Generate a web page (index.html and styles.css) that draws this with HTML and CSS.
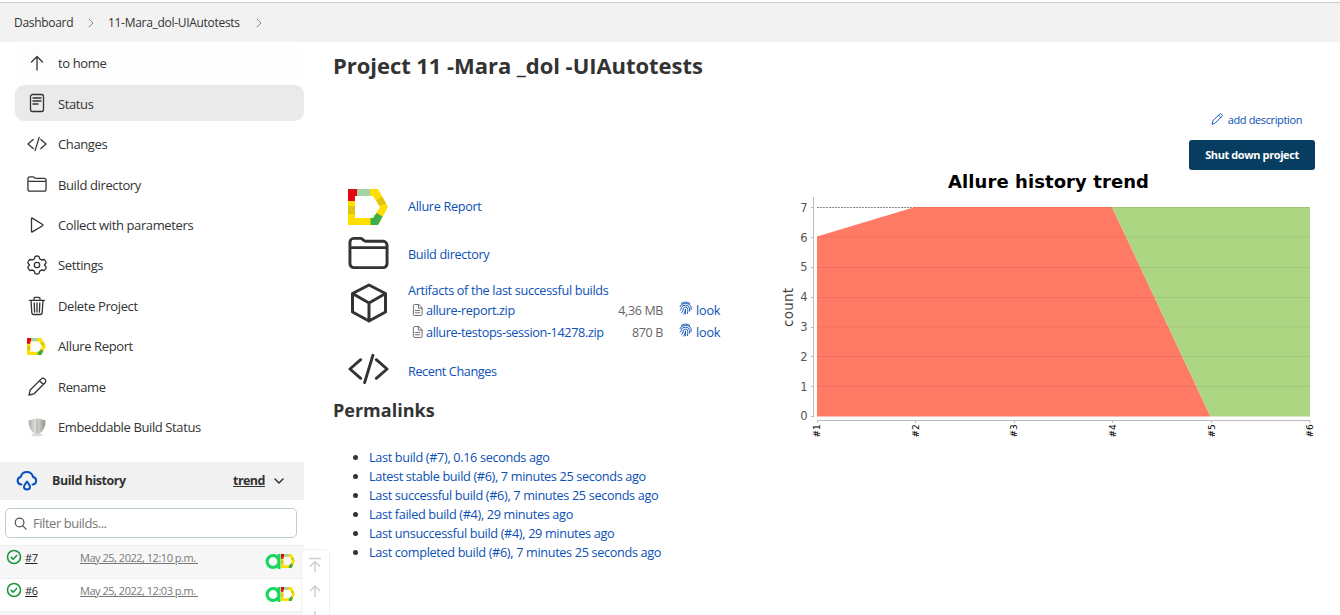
FILE: index.html
```html
<!DOCTYPE html>
<html lang="en">
<head>
<meta charset="utf-8">
<title>11-Mara_dol-UIAutotests</title>
<link rel="stylesheet" href="styles.css">
</head>
<body>
<svg class="defs" aria-hidden="true">
  <symbol id="folder" viewBox="0 0 42 34"><path d="M2 27V6a4 4 0 0 1 4-4h6.500q1.500 0 2.500 1l1.500 1.300q1 .7 2.500.7H36a4 4 0 0 1 4 4v19a4 4 0 0 1-4 4H6a4 4 0 0 1-4-4zM2 11.500h38"/></symbol>
  <symbol id="code" viewBox="0 0 42 32"><path d="M13 6.500 2 16l11 9.500M29 6.500 40 16l-11 9.500M25.500 2l-8.500 28"/></symbol>
  <symbol id="allure" viewBox="0 0 40 36" preserveAspectRatio="none">
    <path fill="#ffde00" d="M0 0h30l10 18-10 18H0zM7 7v22h18l7-11-7-11z" fill-rule="evenodd"/>
    <path fill="#e30613" d="M0 0h9v7H7v5H0z"/><path fill="#a4d3a2" d="M9 0h13v7H9z"/>
    <path fill="#dfc50f" d="M0 17h7v8H0zM28.500 11.500l5.500-4 4 7-6.500 2.500z"/>
    <path fill="#3cad47" d="M22.500 29H25l3.500-5 6 3.500L30 36h-7.500z"/>
  </symbol>
  <symbol id="pencil" viewBox="0 0 20 20"><path d="M2 18l1.200-5L14.300 1.900a2.200 2.200 0 0 1 3.200 0l.6.600a2.200 2.200 0 0 1 0 3.200L7 16.800zM12.500 3.700l3.800 3.800"/></symbol>
  <symbol id="doc" viewBox="0 0 12 14"><path d="M7 1H3Q1.500 1 1.500 2.500v9Q1.500 13 3 13h6.500Q11 13 11 11.500V5zM7 1v4h4M3.500 7.500h5M3.500 10h5"/></symbol>
  <symbol id="print" viewBox="0 0 14 15"><path d="M2.500 2.500Q7-.5 11.500 2.500M1 6Q2 2.500 7 2.500T13 6v3M1.500 10q1-1 1-3Q3 4.500 7 4.500t4.500 3.500v3M3 12.500Q4.500 11 4.500 8.500 4.800 6.500 7 6.500t2.500 2.500q0 2-.3 4.500M5 14q2-2 2-5.500 0 3.500-.3 5.500"/></symbol>
  <symbol id="ok" viewBox="0 0 16 16"><circle cx="8" cy="8" r="6.500"/><path d="M5.200 8.300l2 1.900 3.500-3.700"/></symbol>
  <symbol id="testops" viewBox="0 0 16 16"><path fill="#16d85d" fill-rule="evenodd" d="M8 0q3 0 5 1.500V0h3v16h-3v-1.500Q11 16 8 16a8 8 0 0 1 0-16zm0 3.300a4.700 4.700 0 1 0 0 9.400 4.700 4.700 0 0 0 0-9.400z"/></symbol>
</svg>

<nav class="breadcrumbs">
  <a class="crumb crumb-root">Dashboard</a>
  <svg class="chev" viewBox="0 0 6 10"><path d="M1 1l4 4-4 4"/></svg>
  <a class="crumb crumb-project">11-Mara_dol-UIAutotests</a>
  <svg class="chev" viewBox="0 0 6 10"><path d="M1 1l4 4-4 4"/></svg>
</nav>

<div class="page">
  <aside class="sidebar">
    <div class="tasks">
      <a class="task hover"><svg class="ti" viewBox="0 0 20 20"><path d="M10 17V3.500M4.500 9 10 3.500 15.500 9"/></svg><span>to home</span></a>
      <a class="task active"><svg class="ti" viewBox="0 0 20 20"><rect x="3.500" y="1.500" width="13" height="17" rx="2"/><path d="M6 5h8M6 8h8M6 11h5"/></svg><span>Status</span></a>
      <a class="task"><svg class="ti"><use href="#code"/></svg><span>Changes</span></a>
      <a class="task"><svg class="ti"><use href="#folder"/></svg><span>Build directory</span></a>
      <a class="task"><svg class="ti" viewBox="0 0 20 20"><path d="M4.500 3.500v13q0 .8.800.400l10.300-6.200q.8-.6 0-1.200L5.300 3.100q-.8-.4-.8.400z"/></svg><span>Collect with parameters</span></a>
      <a class="task"><svg class="ti" viewBox="0 0 20 20"><path d="M8 1.500q2-1 4 0l.7 2.400 1.900 1.100 2.600-.5q1.700 1.300 2 3.400L17.500 10l1.700 2.100q-.3 2.100-2 3.400l-2.600-.5-1.900 1.100-.7 2.400q-2 1-4 0l-.7-2.400-1.900-1.100-2.600.5q-1.700-1.300-2-3.400L2.500 10 .8 7.900q.3-2.100 2-3.400l2.600.5 1.900-1.100z"/><circle cx="10" cy="10" r="2.700"/></svg><span>Settings</span></a>
      <a class="task"><svg class="ti" viewBox="0 0 20 20"><path d="M4 4.500l.8 12q.1 2 2 2h6.400q1.900 0 2-2l.8-12M2.500 4.300h15M7 4V2.500Q7 1.300 8.200 1.300h3.600q1.200 0 1.200 1.200V4M10 7v9M7.200 7l.4 9M12.800 7l-.4 9"/></svg><span>Delete Project</span></a>
      <a class="task"><svg class="ti small"><use href="#allure"/></svg><span>Allure Report</span></a>
      <a class="task"><svg class="ti"><use href="#pencil"/></svg><span>Rename</span></a>
      <a class="task"><svg class="ti nos" viewBox="0 0 20 20"><defs><linearGradient id="sh"><stop offset="0" stop-color="#a9aba6"/><stop offset=".45" stop-color="#e4e5e1"/><stop offset="1" stop-color="#8d8f8a"/></linearGradient></defs><ellipse cx="10" cy="18" rx="6" ry="1.500" fill="#ddd"/><path fill="url(#sh)" d="M10 1 18.500 3.500Q19 13 10 18.500 1 13 1.500 3.500z"/><path stroke="#aaa" stroke-dasharray="2 1" d="M10 3v13"/></svg><span>Embeddable Build Status</span></a>
    </div>

    <div class="history-head">
      <svg class="cloud" viewBox="0 0 22 20"><path d="M5.500 13.500H5A3.800 3.800 0 0 1 4.700 6 6.300 6.300 0 0 1 17 6a3.800 3.800 0 0 1 0 7.500h-.5M11 10.500q-6 7.500 0 8 6-.5 0-8z"/></svg>
      <b class="history-title">Build history</b>
      <a class="trend">trend</a>
      <svg class="down" viewBox="0 0 10 6"><path d="M1 1l4 4 4-4"/></svg>
    </div>
    <label class="filter"><svg viewBox="0 0 14 14"><circle cx="6" cy="6" r="4.700"/><path d="M9.500 9.500 13 13"/></svg><span>Filter builds...</span></label>
    <div class="builds">
      <div class="build odd"><svg class="ok"><use href="#ok"/></svg><a class="num">#7</a><a class="date">May 25, 2022, 12:10 p.m.&nbsp;</a><svg class="to"><use href="#testops"/></svg><svg class="al"><use href="#allure"/></svg></div>
      <div class="build"><svg class="ok"><use href="#ok"/></svg><a class="num">#6</a><a class="date">May 25, 2022, 12:03 p.m.&nbsp;</a><svg class="to"><use href="#testops"/></svg><svg class="al"><use href="#allure"/></svg></div>
      <div class="build odd"></div>
    </div>
    <div class="pager">
      <svg viewBox="0 0 14 16"><path d="M1 1.500h12M7 15V5M2 9.500 7 4.500l5 5"/></svg>
      <svg viewBox="0 0 14 16"><path d="M7 14V3M2 8 7 3l5 5"/></svg>
      <svg viewBox="0 0 14 16"><path d="M7 2v11M2 8l5 5 5-5"/></svg>
    </div>
  </aside>

  <main class="content">
    <h1>Project 11 -Mara _dol -UIAutotests</h1>
    <div class="columns">
      <section class="left">
        <div class="row r-allure"><svg class="big allure"><use href="#allure"/></svg><a>Allure Report</a></div>
        <div class="row r-dir"><svg class="big folder"><use href="#folder"/></svg><a>Build directory</a></div>
        <div class="row r-art">
          <svg class="big cube" viewBox="0 0 38 40"><path d="M19 2 35.500 10.500v18.500L19 38 2.500 29V10.500zM2.500 10.500 19 20l16.500-9.500M19 20v18"/></svg>
          <div class="artifacts">
            <a class="art-title">Artifacts of the last successful builds</a>
            <div class="file"><svg class="doc"><use href="#doc"/></svg><a class="name">allure-report.zip</a><span class="size">4,36 MB</span><svg class="print"><use href="#print"/></svg><a class="look">look</a></div>
            <div class="file"><svg class="doc"><use href="#doc"/></svg><a class="name">allure-testops-session-14278.zip</a><span class="size">870 B</span><svg class="print"><use href="#print"/></svg><a class="look">look</a></div>
          </div>
        </div>
        <div class="row r-code"><svg class="big code"><use href="#code"/></svg><a>Recent Changes</a></div>
        <h2>Permalinks</h2>
        <ul class="permalinks">
          <li><a>Last build (#7), 0.16 seconds ago</a></li>
          <li><a>Latest stable build (#6), 7 minutes 25 seconds ago</a></li>
          <li><a>Last successful build (#6), 7 minutes 25 seconds ago</a></li>
          <li><a>Last failed build (#4), 29 minutes ago</a></li>
          <li><a>Last unsuccessful build (#4), 29 minutes ago</a></li>
          <li><a>Last completed build (#6), 7 minutes 25 seconds ago</a></li>
        </ul>
      </section>
      <section class="right">
        <a class="describe"><svg><use href="#pencil"/></svg><span>add description</span></a>
        <button class="shutdown">Shut down project</button>
        <svg class="chart" viewBox="780 170 540 275">
          <text class="c-title" x="948" y="188" textLength="201">Allure history trend</text>
          <path class="grid-top" d="M817 207.500H916"/>
          <path fill="#ff7b66" d="M817 236.500 915 207h197l98.500 209.500H817z"/>
          <path fill="#add683" d="M1112 207h198v209.500h-99.500z"/>
          <path class="grid" d="M817 207.500H1310M817 237H1310M817 267.500H1310M817 297.500H1310M817 327H1310M817 356.500H1310M817 386.500H1310"/>
          <path class="axis" d="M813.500 197V417M817 420.500H1310.500M811 207.500h2M811 237.500h2M811 267.500h2M811 297.500h2M811 327.500h2M811 356.500h2M811 386.500h2M811 416.500h2M817.500 421v2M915.500 421v2M1014.500 421v2M1112.500 421v2M1211.500 421v2M1310 421v2"/>
          <g class="ticks"><text x="807.500" y="212">7</text><text x="807.500" y="242">6</text><text x="807.500" y="271">5</text><text x="807.500" y="301">4</text><text x="807.500" y="331">3</text><text x="807.500" y="361">2</text><text x="807.500" y="391">1</text><text x="807.500" y="420">0</text></g>
          <text class="count" transform="translate(793 327) rotate(-90)" textLength="39">count</text>
          <g class="runs"><text transform="translate(819.500 437.500) rotate(-90)">#1</text><text transform="translate(918.500 437.500) rotate(-90)">#2</text><text transform="translate(1017 437.500) rotate(-90)">#3</text><text transform="translate(1115.500 437.500) rotate(-90)">#4</text><text transform="translate(1214.500 437.500) rotate(-90)">#5</text><text transform="translate(1313 437.500) rotate(-90)">#6</text></g>
        </svg>
      </section>
    </div>
  </main>
</div>
</body>
</html>
```

FILE: styles.css
```css
* { box-sizing: border-box; }
body { margin: 0; height: 615px; overflow: hidden; background: #fff; color: #333; font: 13px/19px "Open Sans", "Noto Sans", sans-serif; }
svg { display: block; flex: none; fill: none; stroke: #333; stroke-width: 1.3; stroke-linecap: round; stroke-linejoin: round; }
.defs { position: absolute; width: 0; height: 0; }
a { color: #0b50b5; white-space: nowrap; }
span { white-space: nowrap; }

.breadcrumbs { height: 42px; margin: 0; border-top: 2px solid #fff; box-shadow: inset 0 1px #ccc; background: #f2f2f2; background-clip: padding-box; display: flex; align-items: center; padding: 1px 0 0 14px; }
.crumb { color: #333; font-size: 12px; letter-spacing: -.3px; }
.crumb-root { width: 59px; }
.crumb-project { width: 133px; }
.chev { width: 6px; height: 10px; margin: 0 14px 0 15px; stroke: #888; stroke-width: 1; }

.page { display: flex; height: 573px; }
.sidebar { position: relative; width: 304px; flex: none; }
.tasks { height: 420px; padding: 3px 0 0 15px; display: flex; flex-direction: column; gap: 4.45px; }
.task { height: 36px; flex: none; width: 289px; border-radius: 9px; padding-left: 12px; display: flex; align-items: center; gap: 11px; color: #333; letter-spacing: -.38px; }
.task span { padding-top: 1.400px; }
.hover { background: #fdfdfd; }
.active { background: #eaeaea; }
.ti { width: 20px; height: 20px; stroke-width: 1.3; }
.ti use[href="#code"], .ti use[href="#folder"] { stroke-width: 2.7; }
.small { height: 17px; width: 19px; margin-right: 1px; }
.small, .allure, .al, .to, .nos { stroke: none; }

.history-head { height: 38px; background: #f1f1f1; display: flex; align-items: center; padding-left: 16px; }
.cloud { width: 22px; height: 20px; stroke: #0b50c0; stroke-width: 2; }
.history-title { width: 195px; padding: 0 0 2px 14px; font-size: 12.500px; letter-spacing: -.45px; }
.trend { color: #333; font-weight: 700; font-size: 12.500px; letter-spacing: -.55px; width: 32px; padding-bottom: 2px; text-decoration: underline; }
.down { width: 10px; height: 6px; margin-left: 9px; stroke-width: 1.5; }
.filter { margin: 8px 0 7px 5px; width: 292px; height: 30px; border: 1px solid #bccad2; border-radius: 5px; display: flex; align-items: center; gap: 6px; padding-left: 8px; color: #777; letter-spacing: -.45px; }
.filter svg { width: 13px; height: 13px; stroke: #555; }
.build { height: 33px; border-top: 1px solid #eee; display: flex; padding: 4px 0 0 6px; }
.odd { background: #f7f7f7; }
.ok { width: 16px; height: 16px; margin: -1px 3px 0 0; stroke: #1c9440; stroke-width: 1.6; }
.num, .date { font-size: 11px; line-height: 16px; text-decoration: underline; letter-spacing: -.48px; }
.num { width: 55px; color: #222; }
.date { width: 185px; color: #777; }
.to { width: 16px; height: 15px; margin-top: 4px; }
.al { width: 14px; height: 14px; margin-top: 4px; }
.pager { position: absolute; left: 301px; top: 507px; width: 29px; height: 80px; border: 1px solid #f0f0f0; border-radius: 5px; background: rgba(255,255,255,.8); }
.pager svg { width: 14px; height: 16px; margin: 7px 0 0 6px; stroke: #ccc; stroke-width: 1.4; stroke-linecap: butt; }
.pager svg + svg { margin-top: 10px; }

.content { flex: 1; padding-left: 29px; }
h1 { margin: 7px 0 0; font-size: 22px; line-height: 32px; font-weight: 700; letter-spacing: -.05px; white-space: nowrap; }
.columns { display: flex; }
.left { width: 447px; padding-top: 105px; }
.left a { font-weight: 500; font-size: 12.700px; letter-spacing: -.34px; }
.row { display: flex; }
.big { stroke-width: 3; margin-left: 15px; }
.row > a, .artifacts { margin-left: 19px; }
.r-allure { height: 49px; padding-top: 3px; }
.row > .allure { width: 40px; height: 36px; }
.r-allure > a { margin: 8px 0 0 20px; }
.r-dir { height: 47px; }
.folder { width: 41px; height: 34px; margin-top: 1px; }
.r-dir > a { margin-top: 10px; }
.r-art { height: 71px; }
.cube { width: 38px; height: 40px; margin: 1px 0 0 17px; }
.r-art .artifacts { margin: -1px 0 0 20px; }
.art-title { display: block; height: 18px; }
.file { height: 22px; display: flex; align-items: center; padding-left: 4px; }
.doc { width: 11px; height: 14px; stroke: #666; stroke-width: 1; margin-right: 3px; }
.left .name { width: 178px; letter-spacing: -.38px; }
.size { width: 59px; text-align: right; color: #666; font-size: 12.500px; letter-spacing: -.35px; }
.print { width: 13px; height: 14px; margin: 0 4px 4px 16px; stroke: #0b50b5; stroke-width: 1; }
.left .look { letter-spacing: -.2px; }
.r-code { height: 46px; }
.code { width: 41px; height: 32px; }
.r-code > a { margin-top: 9px; letter-spacing: -.42px; }
h2 { margin: -1px 0 0; font-size: 18px; line-height: 24px; }
.permalinks { margin: 26px 0 0; padding-left: 36px; }

.right { width: 540px; display: flex; flex-direction: column; align-items: flex-end; padding-top: 28px; }
.describe { display: flex; align-items: center; gap: 5px; margin-right: 18px; font-size: 11px; letter-spacing: -.38px; height: 20px; }
.describe svg { width: 12px; height: 12px; stroke: #0b50b5; stroke-width: 1.6; }
.shutdown { width: 126px; height: 30px; margin: 11px 5px 0 0; border: 0; border-radius: 3px; background: #083d62; color: #fff; font: 700 11px "Open Sans", sans-serif; letter-spacing: -.4px; padding: 0 0 2px; white-space: nowrap; }
.chart { width: 540px; height: 275px; stroke-width: 1; }
.chart text { stroke: none; font-family: "DejaVu Sans", sans-serif; }
.chart > path { stroke-linecap: butt; stroke: none; }
.chart .c-title { font-weight: 700; font-size: 18px; fill: #000; }
.chart .grid-top { stroke: #999; stroke-dasharray: 2 1; }
.chart .grid { stroke: rgba(90,40,10,.13); stroke-dasharray: 3 1; }
.chart .axis { stroke: #bbb; }
.ticks { fill: #555; font-size: 11.500px; text-anchor: end; }
.chart .count { font-size: 13.500px; fill: #444; }
.runs { font-size: 9px; fill: #000; }
```
